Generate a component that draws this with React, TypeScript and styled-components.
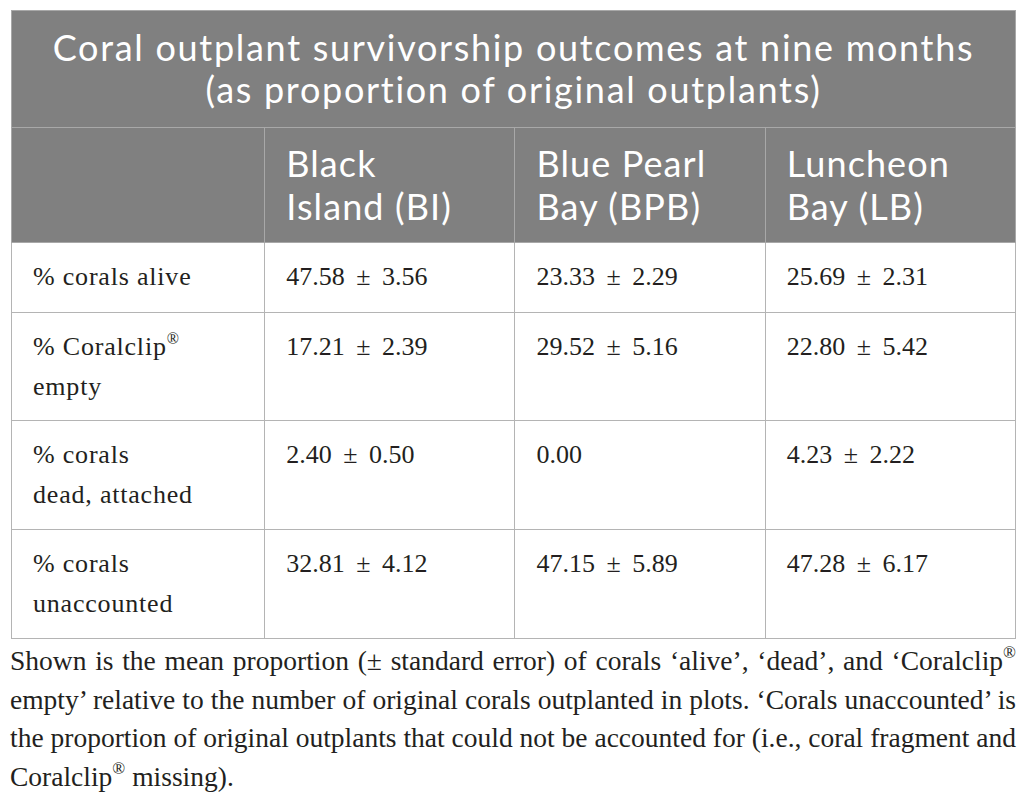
import styled, { createGlobalStyle } from "styled-components";

const GlobalStyle = createGlobalStyle`
  html, body {
    margin: 0;
    padding: 0;
    background: #ffffff;
  }
`;

const Page = styled.div`
  width: 1026px;
  padding: 10px 10px 0 10px;
  box-sizing: border-box;
`;

const Table = styled.table`
  width: 1005px;
  border-collapse: collapse;
  table-layout: fixed;
  margin-left: 1px;
`;

const TitleCell = styled.th`
  background: #808080;
  color: #ffffff;
  font-family: Lato, "Open Sans", sans-serif;
  font-weight: 400;
  font-size: 36px;
  letter-spacing: 1.7px;
  line-height: 42px;
  text-align: center;
  padding: 15px 4px 17px;
  border: 1px solid #a8a8a8;
  white-space: nowrap;
`;

const HeadCell = styled.th`
  background: #808080;
  color: #ffffff;
  font-family: Lato, "Open Sans", sans-serif;
  font-weight: 400;
  font-size: 36px;
  letter-spacing: 1.1px;
  line-height: 43px;
  text-align: left;
  vertical-align: top;
  padding: 14px 21px 14px;
  border: 1px solid #a8a8a8;
`;

const Cell = styled.td<{ $value?: boolean }>`
  font-family: "Liberation Serif", "Times New Roman", serif;
  font-size: 26px;
  line-height: 40px;
  color: #231f20;
  vertical-align: top;
  padding: 14px 21px 13px;
  border: 1px solid #b4b4b4;
  word-spacing: ${(p) => (p.$value ? "5px" : "0")};
  letter-spacing: ${(p) => (p.$value ? "0" : "0.8px")};
`;

const Sup = styled.sup`
  font-size: 0.62em;
  line-height: 0;
  vertical-align: 0.7em;
`;

const Caption = styled.div`
  margin-top: 3px;
  font-family: "Liberation Serif", "Times New Roman", serif;
  font-size: 27.5px;
  line-height: 38.5px;
  color: #231f20;
  width: 1006px;
`;

const CaptionLine = styled.div<{ $last?: boolean }>`
  text-align: ${(p) => (p.$last ? "left" : "justify")};
  text-align-last: ${(p) => (p.$last ? "left" : "justify")};
  white-space: nowrap;
`;

const Reg = () => <Sup>®</Sup>;

const rows: { label: React.ReactNode; values: string[]; height: number }[] = [
  { label: "% corals alive", values: ["47.58 ± 3.56", "23.33 ± 2.29", "25.69 ± 2.31"], height: 70 },
  {
    label: (
      <>
        % Coralclip<Reg />
        <br />
        empty
      </>
    ),
    values: ["17.21 ± 2.39", "29.52 ± 5.16", "22.80 ± 5.42"],
    height: 108,
  },
  {
    label: (
      <>
        % corals
        <br />
        dead, attached
      </>
    ),
    values: ["2.40 ± 0.50", "0.00", "4.23 ± 2.22"],
    height: 109,
  },
  {
    label: (
      <>
        % corals
        <br />
        unaccounted
      </>
    ),
    values: ["32.81 ± 4.12", "47.15 ± 5.89", "47.28 ± 6.17"],
    height: 109,
  },
];

export default function App() {
  return (
    <>
      <GlobalStyle />
      <Page>
        <Table>
          <colgroup>
            <col style={{ width: 253 }} />
            <col style={{ width: 250 }} />
            <col style={{ width: 250 }} />
            <col style={{ width: 250 }} />
          </colgroup>
          <thead>
            <tr>
              <TitleCell colSpan={4}>
                Coral outplant survivorship outcomes at nine months
                <br />
                (as proportion of original outplants)
              </TitleCell>
            </tr>
            <tr>
              <HeadCell />
              <HeadCell>
                Black
                <br />
                Island (BI)
              </HeadCell>
              <HeadCell>
                Blue Pearl
                <br />
                Bay (BPB)
              </HeadCell>
              <HeadCell>
                Luncheon
                <br />
                Bay (LB)
              </HeadCell>
            </tr>
          </thead>
          <tbody>
            {rows.map((r, i) => (
              <tr key={i} style={{ height: r.height }}>
                <Cell>{r.label}</Cell>
                {r.values.map((v, j) => (
                  <Cell key={j} $value>
                    {v}
                  </Cell>
                ))}
              </tr>
            ))}
          </tbody>
        </Table>
        <Caption>
          <CaptionLine>
            Shown is the mean proportion (± standard error) of corals ‘alive’, ‘dead’, and ‘Coralclip
            <Reg />
          </CaptionLine>
          <CaptionLine>
            empty’ relative to the number of original corals outplanted in plots. ‘Corals unaccounted’ is
          </CaptionLine>
          <CaptionLine>
            the proportion of original outplants that could not be accounted for (i.e., coral fragment and
          </CaptionLine>
          <CaptionLine $last>
            Coralclip
            <Reg /> missing).
          </CaptionLine>
        </Caption>
      </Page>
    </>
  );
}
